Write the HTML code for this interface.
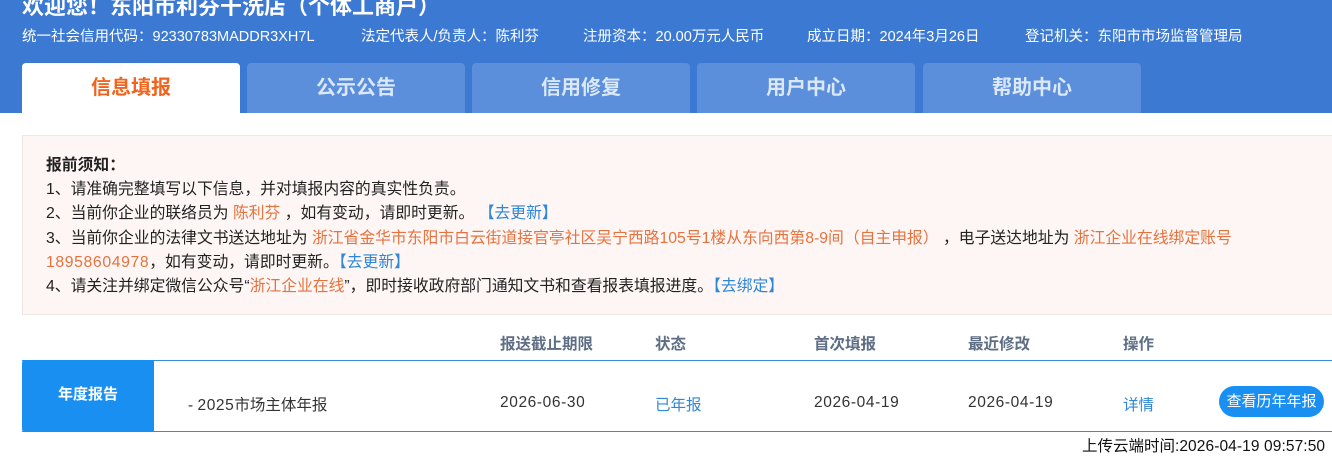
<!DOCTYPE html>
<html><head><meta charset="utf-8"><style>
*{margin:0;padding:0;box-sizing:border-box}
body{width:1332px;height:457px;overflow:hidden;background:#fff;font-family:"Liberation Sans","Noto Sans CJK SC",sans-serif;position:relative}
.hd{position:absolute;left:0;top:0;width:1332px;height:113px;background:#3b79d2}
.title{position:absolute;left:22px;top:-11px;color:#fff;font-size:22px;font-weight:bold;white-space:nowrap}
.info{position:absolute;top:25px;color:#fff;font-size:14.5px;white-space:nowrap}
.tab{position:absolute;top:63px;height:50px;width:218px;background:#5b8fdb;color:#dbe8fa;font-size:20px;font-weight:bold;text-align:center;line-height:50px;border-radius:4px 4px 0 0}
.tab.on{background:#fff;color:#f0641e}
.nt{position:absolute;left:22px;top:135px;width:1320px;height:180px;background:#fdf6f4;border:1px solid #f0e6e4;font-size:15.8px;color:#222}
.nt p{position:absolute;left:23px;white-space:nowrap}
.o{color:#e5733f}.b{color:#2f87d8}
.th{position:absolute;top:332px;font-size:15.5px;font-weight:bold;color:#5e6e85}
.row{position:absolute;left:22px;top:360px;width:1310px;height:72px;border-top:1px solid #3a8ad6;border-bottom:1px solid #3a8ad6}
.lab{position:absolute;left:22px;top:360px;width:132px;height:72px;background:#1a8ff2;color:#fff;font-weight:bold;font-size:15px;text-align:center;line-height:70px;border-radius:3px 0 0 3px}
.td{position:absolute;top:393px;font-size:15.5px;color:#333;white-space:nowrap}
.n{letter-spacing:0.6px}
.btn{position:absolute;left:1219px;top:386px;width:105px;height:31px;background:#1a8ff2;border-radius:16px;color:#fff;font-size:15px;text-align:center;line-height:31px;white-space:nowrap}
</style></head><body>
<div class="hd">
<div class="title">欢迎您！东阳市利芬干洗店（个体工商户）</div>
<div class="info" style="left:22px">统一社会信用代码：92330783MADDR3XH7L</div>
<div class="info" style="left:361px">法定代表人/负责人：陈利芬</div>
<div class="info" style="left:583px">注册资本：20.00万元人民币</div>
<div class="info" style="left:807px">成立日期：2024年3月26日</div>
<div class="info" style="left:1025px">登记机关：东阳市市场监督管理局</div>
<div class="tab on" style="left:22px">信息填报</div>
<div class="tab" style="left:247px">公示公告</div>
<div class="tab" style="left:472px">信用修复</div>
<div class="tab" style="left:697px">用户中心</div>
<div class="tab" style="left:923px">帮助中心</div>
</div>
<div class="nt">
<p style="top:16px;font-weight:bold">报前须知：</p>
<p style="top:40px">1、请准确完整填写以下信息，并对填报内容的真实性负责。</p>
<p style="top:64px">2、当前你企业的联络员为 <span class="o">陈利芬</span> ，如有变动，请即时更新。 <span class="b">【去更新】</span></p>
<p style="top:89px">3、当前你企业的法律文书送达地址为 <span class="o">浙江省金华市东阳市白云街道接官亭社区吴宁西路105号1楼从东向西第8-9间（自主申报）</span> ，电子送达地址为 <span class="o">浙江企业在线绑定账号</span></p>
<p style="top:113px"><span class="o n">18958604978</span>，如有变动，请即时更新。<span class="b">【去更新】</span></p>
<p style="top:137px">4、请关注并绑定微信公众号“<span class="o">浙江企业在线</span>”，即时接收政府部门通知文书和查看报表填报进度。<span class="b">【去绑定】</span></p>
</div>
<div class="th" style="left:500px">报送截止期限</div>
<div class="th" style="left:655px">状态</div>
<div class="th" style="left:814px">首次填报</div>
<div class="th" style="left:968px">最近修改</div>
<div class="th" style="left:1123px">操作</div>
<div class="row"></div>
<div class="lab">年度报告</div>
<div class="td" style="left:188px">- <span class="n">2025</span>市场主体年报</div>
<div class="td n" style="left:500px;top:394px">2026-06-30</div>
<div class="td" style="left:655px;color:#2f87d8">已年报</div>
<div class="td n" style="left:814px;top:394px">2026-04-19</div>
<div class="td n" style="left:968px;top:394px">2026-04-19</div>
<div class="td" style="left:1123px;color:#2f87d8">详情</div>
<div class="btn">查看历年年报</div>
<div style="position:absolute;left:1082px;top:434px;font-size:15.5px;color:#111;white-space:nowrap">上传云端时间:<span style="letter-spacing:0.1px">2026-04-19 09:57:50</span></div>
</body></html>
